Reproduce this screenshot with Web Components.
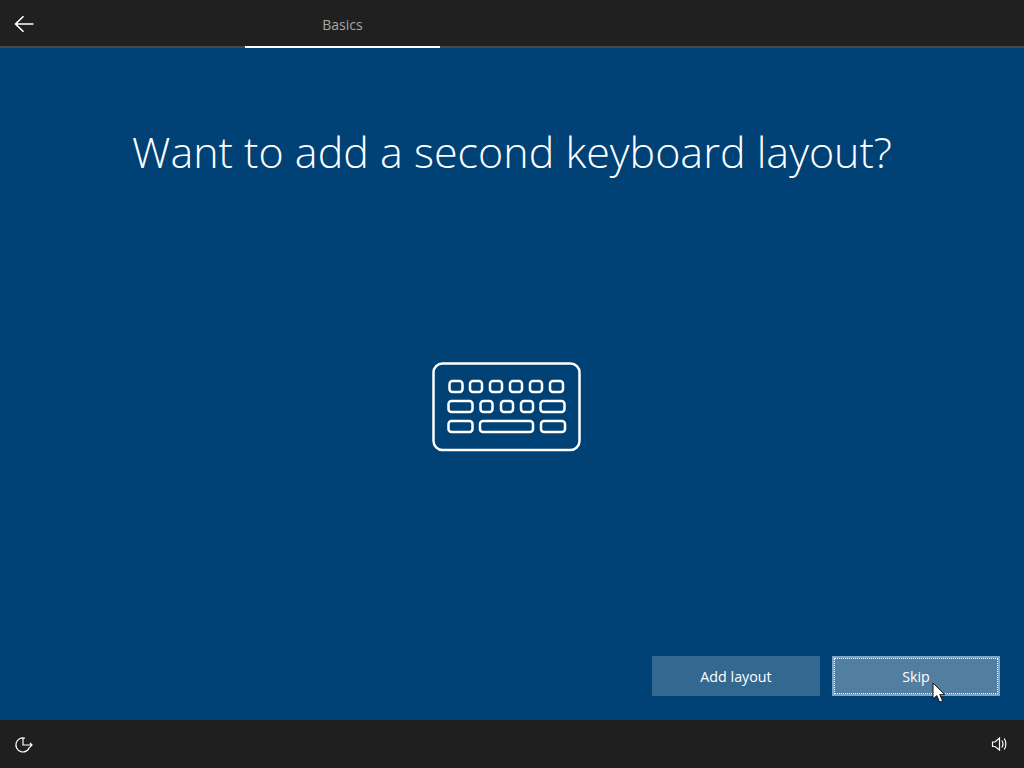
<!DOCTYPE html>
<html lang="en">
<head>
<meta charset="utf-8">
<title>Keyboard layout</title>
<style>
  html, body { margin: 0; padding: 0; height: 100%; background: #004275; }
  body { font-family: "Open Sans", "Liberation Sans", sans-serif; overflow: hidden; }
</style>
</head>
<body>
<oobe-app>
  <oobe-header slot="header" label="Basics"></oobe-header>
  <oobe-title slot="title">Want to add a second keyboard layout?</oobe-title>
  <keyboard-icon slot="icon"></keyboard-icon>
  <oobe-button slot="actions">Add layout</oobe-button>
  <oobe-button slot="actions" focused>Skip</oobe-button>
  <oobe-footer slot="footer"></oobe-footer>
</oobe-app>

<script>
(function() {
  // Page frame: header, blue main area, footer
  class OobeApp extends HTMLElement {
    constructor() {
      super();
      this.attachShadow({ mode: 'open' });
      this.shadowRoot.innerHTML = `
        <style>
          :host {
            display: flex;
            flex-direction: column;
            width: 1024px;
            height: 768px;
          }
          main {
            flex: 1;
            display: flex;
            flex-direction: column;
            align-items: center;
            background: #004275;
            min-height: 0;
          }
          .icon-area {
            height: 90px;
            margin-top: 176px;
            margin-right: 11px;
          }
          .actions {
            margin-top: auto;
            align-self: flex-end;
            display: flex;
            gap: 12px;
            padding: 0 24px 24px 0;
          }
        </style>
        <slot name="header"></slot>
        <main>
          <slot name="title"></slot>
          <div class="icon-area"><slot name="icon"></slot></div>
          <div class="actions"><slot name="actions"></slot></div>
        </main>
        <slot name="footer"></slot>
      `;
    }
  }

  class OobeHeader extends HTMLElement {
    constructor() {
      super();
      this.attachShadow({ mode: 'open' });
    }

    connectedCallback() {
      const label = this.getAttribute('label') || '';
      this.shadowRoot.innerHTML = `
        <style>
          :host {
            display: flex;
            height: 46px;
            background: #202020;
            border-bottom: 2px solid #484848;
          }
          .back {
            width: 48px;
            height: 48px;
            display: flex;
            align-items: center;
            justify-content: center;
          }
          .tab {
            width: 195px;
            margin-left: 197px;
            height: 48px;
            box-sizing: border-box;
            border-bottom: 2px solid #fff;
            display: flex;
            justify-content: center;
            padding-top: 15px;
            font-size: 14px;
            line-height: 19px;
            color: #a8a8a8;
          }
        </style>
        <div class="back">
          <svg width="48" height="48" viewBox="0 0 48 48" fill="none" stroke="#fff" stroke-width="1.6">
            <path d="M15.5 24H33.5M23.5 16.2L15.5 24L23.5 31.8"/>
          </svg>
        </div>
        <div class="tab">${label}</div>
      `;
    }
  }

  class OobeTitle extends HTMLElement {
    constructor() {
      super();
      this.attachShadow({ mode: 'open' });
      this.shadowRoot.innerHTML = `
        <style>
          :host {
            display: block;
            margin-top: 70px;
            font-size: 43px;
            font-weight: 300;
            line-height: 68px;
            color: #fff;
            white-space: nowrap;
          }
        </style>
        <slot></slot>
      `;
    }
  }

  class KeyboardIcon extends HTMLElement {
    constructor() {
      super();
      this.attachShadow({ mode: 'open' });
      const keys = [
        // y of the row, then x and width of its keys, relative to the outer frame
        [380, [[17.5, 13], [38, 12], [58, 12], [78, 12], [98, 12], [118, 13]]],
        [400, [[16.5, 24], [48.5, 12], [69, 12], [89, 12], [108.5, 24]]],
        [420, [[16.5, 24], [48, 53], [109, 24]]]
      ];
      const rects = keys.map(([y, row]) => row.map(([x, w]) =>
        `<rect x="${x}" y="${y - 362 + 1}" width="${w}" height="11" rx="3"/>`
      ).join('')).join('');
      this.shadowRoot.innerHTML = `
        <style>
          :host { display: block; width: 150px; height: 90px; }
          svg { display: block; }
        </style>
        <svg width="150" height="90" viewBox="0 0 150 90" fill="none" stroke="#fff" stroke-width="2.5">
          <rect x="1.5" y="1.5" width="146" height="86.5" rx="9"/>
          ${rects}
        </svg>
      `;
    }
  }

  class OobeButton extends HTMLElement {
    constructor() {
      super();
      this.attachShadow({ mode: 'open' });
      this.shadowRoot.innerHTML = `
        <style>
          :host {
            display: flex;
            position: relative;
            align-items: center;
            justify-content: center;
            box-sizing: border-box;
            width: 168px;
            height: 40px;
            background: #336890;
            color: #fff;
            font-size: 14.3px;
          }
          :host([focused]) {
            background: #527ea0;
            border: 2px solid #7fa6ca;
          }
          .focus {
            display: none;
            position: absolute;
            inset: 0;
            border: 1px dotted #fff;
          }
          :host([focused]) .focus { display: block; }
          svg {
            display: none;
            position: absolute;
            left: 98px;
            top: 24px;
          }
          :host([focused]) svg { display: block; }
        </style>
        <slot></slot>
        <div class="focus"></div>
        <svg width="16" height="22" viewBox="0 0 16 22">
          <path d="M1 1V17L4.8 13.6L7.6 20.2L10.6 18.9L7.8 12.6H12.8Z" fill="#fff" stroke="#111" stroke-width="1"/>
        </svg>
      `;
    }
  }

  class OobeFooter extends HTMLElement {
    constructor() {
      super();
      this.attachShadow({ mode: 'open' });
      this.shadowRoot.innerHTML = `
        <style>
          :host {
            display: flex;
            justify-content: space-between;
            align-items: center;
            height: 48px;
            background: #1f1f1f;
          }
          svg { display: block; }
        </style>
        <svg width="48" height="48" viewBox="0 0 48 48" fill="none" stroke="#fff" stroke-width="1.2">
          <path d="M29.6 27A7 7 0 1 1 25 18.3"/>
          <path d="M23 18V25H32M30 23L32 25L30 27"/>
        </svg>
        <svg width="38" height="48" viewBox="0 0 38 48" fill="none" stroke="#fff" stroke-width="1.2">
          <path d="M6.5 22V26.5H9L13.5 30V18L9 22Z"/>
          <path d="M15.8 20.5C17.2 22.5 17.2 25.5 15.8 27.5M18.2 18.5C20.4 21.5 20.4 26.5 18.2 29.5"/>
        </svg>
      `;
    }
  }

  customElements.define('oobe-app', OobeApp);
  customElements.define('oobe-header', OobeHeader);
  customElements.define('oobe-title', OobeTitle);
  customElements.define('keyboard-icon', KeyboardIcon);
  customElements.define('oobe-button', OobeButton);
  customElements.define('oobe-footer', OobeFooter);
})();
</script>
</body>
</html>
